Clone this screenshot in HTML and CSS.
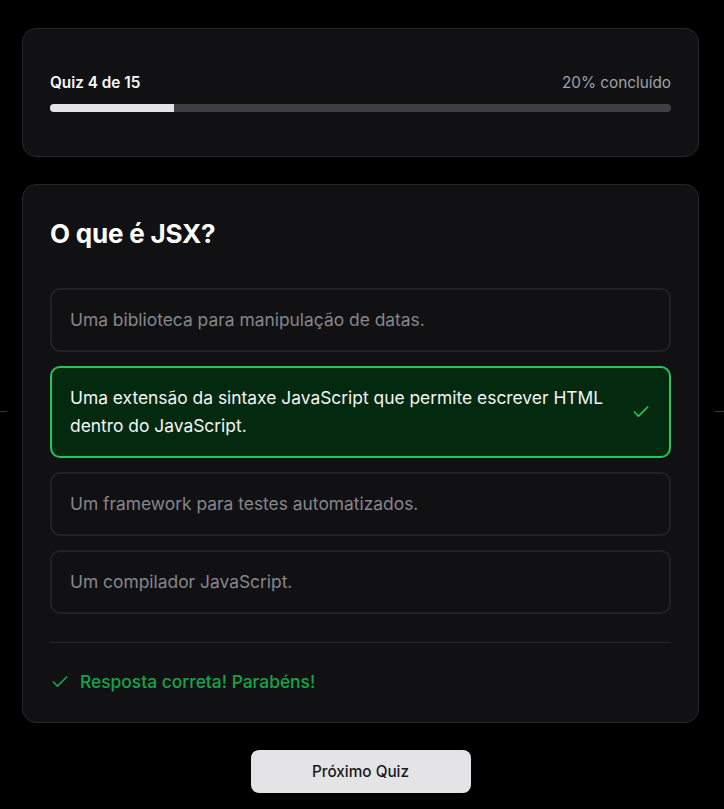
FILE: index.html
```html
<!DOCTYPE html>
<html lang="pt-BR">
<head>
<meta charset="utf-8">
<title>Quiz</title>
<link rel="stylesheet" href="styles.css">
</head>
<body>
<div class="deco-line"></div>
<main class="page">
  <section class="card progress-card">
    <div class="progress-head">
      <span class="progress-title">Quiz 4 de 15</span>
      <span class="progress-pct">20% concluído</span>
    </div>
    <div class="track"><div class="fill" style="width:20%"></div></div>
  </section>

  <section class="card question-card">
    <h1 class="question">O que é JSX?</h1>
    <div class="options">
      <div class="option">Uma biblioteca para manipulação de datas.</div>
      <div class="option option-correct">
        <span class="option-text">Uma extensão da sintaxe JavaScript que permite escrever HTML dentro do JavaScript.</span>
        <svg class="check" width="20" height="20" viewBox="0 0 24 24" fill="none" stroke="currentColor" stroke-width="2" stroke-linecap="round" stroke-linejoin="round"><path d="M20 6 9 17l-5-5"/></svg>
      </div>
      <div class="option">Um framework para testes automatizados.</div>
      <div class="option">Um compilador JavaScript.</div>
    </div>
    <div class="feedback">
      <svg class="check" width="20" height="20" viewBox="0 0 24 24" fill="none" stroke="currentColor" stroke-width="2" stroke-linecap="round" stroke-linejoin="round"><path d="M20 6 9 17l-5-5"/></svg>
      <span>Resposta correta! Parabéns!</span>
    </div>
  </section>

  <div class="actions">
    <button class="next-btn">Próximo Quiz</button>
  </div>
</main>
</body>
</html>
```

FILE: styles.css
```css
* { box-sizing: border-box; }
html, body { margin: 0; padding: 0; background: #000; }
body {
  font-family: Inter, "Noto Sans", "Liberation Sans", sans-serif;
  color: #f4f4f5;
  position: relative;
  min-height: 809px;
}
.deco-line {
  position: absolute;
  top: 411px;
  left: 0;
  right: 0;
  height: 1px;
  background: linear-gradient(to right, #3a3a3d 0 7px, transparent 7px calc(100% - 9px), #3a3a3d calc(100% - 9px));
}
.page {
  position: relative;
  width: 677px;
  margin-left: 22px;
  padding-top: 28px;
  display: flex;
  flex-direction: column;
  gap: 27px;
}
.card {
  background: #111113;
  border: 1px solid #27272a;
  border-radius: 14px;
}
.progress-card {
  padding: 44px 27px 44px;
  display: flex;
  flex-direction: column;
  gap: 11px;
}
.progress-head {
  display: flex;
  justify-content: space-between;
  align-items: center;
  height: 20px;
  font-size: 15.3px;
  line-height: 20px;
}
.progress-title { font-weight: 600; color: #fafafa; }
.progress-pct { color: #a1a1aa; }
.track {
  height: 8px;
  background: #3f3f46;
  border-radius: 999px;
  overflow: hidden;
}
.fill {
  height: 100%;
  background: #e4e4e7;
}
.question-card {
  padding: 33px 27px 28px;
}
.question {
  margin: 0 0 38px;
  font-size: 26px;
  line-height: 32px;
  font-weight: 700;
  color: #ffffff;
  letter-spacing: -0.2px;
}
.options {
  display: flex;
  flex-direction: column;
  gap: 14px;
}
.option {
  display: flex;
  align-items: center;
  justify-content: space-between;
  gap: 24px;
  padding: 16px 18px;
  border: 2px solid #222225;
  border-radius: 10px;
  font-size: 17.4px;
  line-height: 28px;
  color: #86868c;
  background: #111113;
}
.option-correct {
  border-color: #22c55e;
  background: #032a0e;
  color: #f4f4f5;
}
.option-correct .check { color: #22c55e; flex: none; }
.feedback {
  margin-top: 28px;
  border-top: 1px solid #27272a;
  padding-top: 27px;
  display: flex;
  align-items: center;
  gap: 10px;
  font-size: 17.4px;
  line-height: 24px;
  font-weight: 500;
  color: #16a34a;
}
.feedback .check { color: #16a34a; flex: none; }
.actions {
  display: flex;
  justify-content: center;
}
.next-btn {
  width: 220px;
  height: 43px;
  border: none;
  border-radius: 8px;
  background: #e4e4e7;
  color: #18181b;
  font-family: inherit;
  font-size: 15.3px;
  font-weight: 500;
}
```
